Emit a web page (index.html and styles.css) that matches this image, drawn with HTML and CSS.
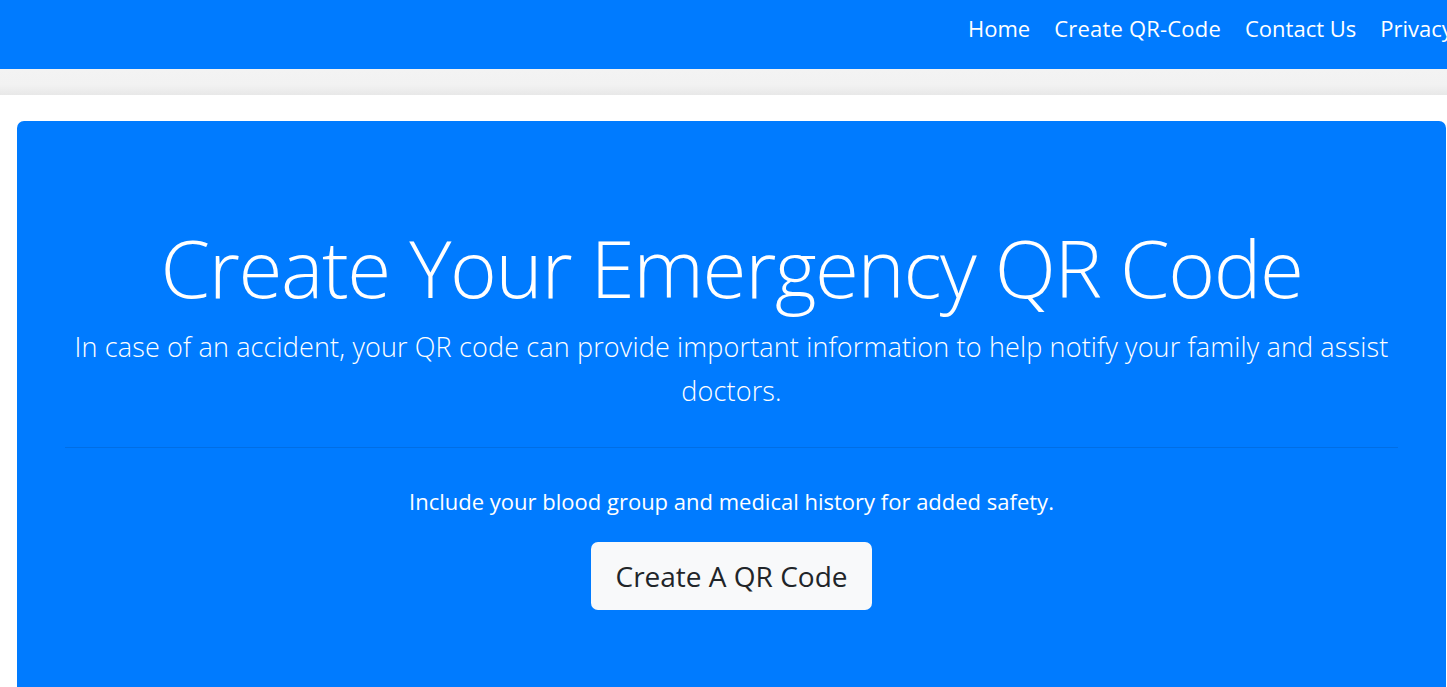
FILE: index.html
```html
<!DOCTYPE html>
<html lang="en">
<head>
<meta charset="utf-8">
<title>Emergency QR Code</title>
<link rel="stylesheet" href="styles.css">
</head>
<body>
<header class="navbar">
  <ul class="nav-list">
    <li><a class="nav-link" href="#">Home</a></li>
    <li><a class="nav-link" href="#">Create QR-Code</a></li>
    <li><a class="nav-link" href="#">Contact Us</a></li>
    <li><a class="nav-link" href="#">Privacy</a></li>
  </ul>
</header>
<div class="subbar"></div>
<main class="page">
  <section class="jumbotron">
    <h1 class="display">Create Your Emergency QR Code</h1>
    <p class="lead">In case of an accident, your QR code can provide important information to help notify your family and assist doctors.</p>
    <hr class="divider">
    <p class="note">Include your blood group and medical history for added safety.</p>
    <a class="btn" href="#">Create A QR Code</a>
  </section>
</main>
</body>
</html>
```
FILE: styles.css
```css
* { box-sizing: border-box; }
html, body { margin: 0; padding: 0; }
body {
  font-family: "Open Sans", "Noto Sans", sans-serif;
  font-size: 24px;
  color: #212529;
  background: #fff;
  overflow: hidden;
  width: 1447px;
  height: 687px;
}
.navbar {
  height: 69px;
  background: #007bff;
  display: flex;
  align-items: center;
  overflow: hidden;
}
.nav-list {
  list-style: none;
  margin: 0 0 0 956px;
  padding: 0;
  display: flex;
  white-space: nowrap;
}
.nav-link {
  display: block;
  padding: 0 12px;
  color: #fff;
  text-decoration: none;
  font-size: 22px;
  line-height: 36px;
  position: relative;
  top: -7px;
}
.nav-list li:nth-child(2) .nav-link { letter-spacing: 0.2px; }
.subbar {
  height: 26px;
  background: linear-gradient(#f3f3f3 0%, #f2f2f2 60%, #e8e8e8 100%);
}
.page {
  padding: 26px 1px 0 17px;
}
.jumbotron {
  background: #007bff;
  border-radius: 7px;
  padding: 96px 48px 96px;
  color: #fff;
  text-align: center;
  min-height: 600px;
}
.display {
  margin: 0 0 8px;
  font-size: 80px;
  font-weight: 300;
  line-height: 100px;
  letter-spacing: -1.4px;
}
.lead {
  margin: 0 0 34px;
  font-size: 27px;
  font-weight: 300;
  line-height: 44px;
  letter-spacing: 0.15px;
}
.divider {
  border: 0;
  border-top: 1px solid rgba(0,0,0,0.1);
  margin: 0 0 35px;
}
.note {
  margin: 0 0 23px;
  font-size: 22px;
  line-height: 36px;
}
.btn {
  display: inline-block;
  background: #f8f9fa;
  color: #212529;
  text-decoration: none;
  font-size: 28px;
  line-height: 44px;
  padding: 12px 25px;
  border-radius: 7px;
}
```
